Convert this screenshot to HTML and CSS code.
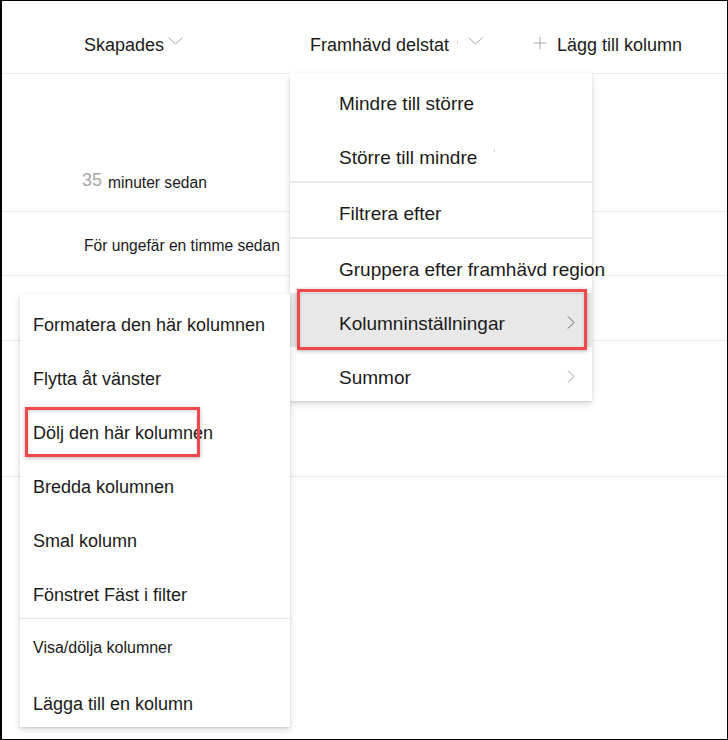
FILE: index.html
```html
<!DOCTYPE html>
<html lang="sv">
<head>
<meta charset="utf-8">
<title>Kolumninställningar</title>
<link rel="stylesheet" href="styles.css">
</head>
<body>
<div class="frame">
  <div class="header">
    <div class="hcol hcol-created">
      <span class="htext">Skapades</span>
      <svg class="hchev" width="15" height="8" viewBox="0 0 15 8"><path d="M0.5 0.5 L7.5 7 L14.5 0.5" fill="none" stroke="#a6a6a6" stroke-width="1"/></svg>
    </div>
    <div class="hcol hcol-state">
      <span class="htext">Framhävd delstat</span>
      <span class="speck speck-head"></span>
      <svg class="hchev hchev-state" width="15" height="8" viewBox="0 0 15 8"><path d="M0.5 0.5 L7.5 7 L14.5 0.5" fill="none" stroke="#a6a6a6" stroke-width="1"/></svg>
    </div>
    <div class="hcol hcol-add">
      <svg class="plus" width="12" height="12" viewBox="0 0 12 12"><path d="M6 0 V12 M0 6 H12" fill="none" stroke="#a6a6a6" stroke-width="1"/></svg>
      <span class="htext">Lägg till kolumn</span>
    </div>
  </div>

  <div class="rows">
    <div class="row row-1">
      <span class="num">35</span><span class="cell-text">minuter sedan</span>
    </div>
    <div class="row row-2">
      <span class="cell-text">För ungefär en timme sedan</span>
    </div>
    <div class="row row-3"></div>
    <div class="row row-4"></div>
  </div>

  <div class="menu main-menu">
    <div class="mi">Mindre till större</div>
    <div class="mi">Större till mindre<span class="speck speck-item"></span></div>
    <div class="msep"></div>
    <div class="mi">Filtrera efter</div>
    <div class="msep"></div>
    <div class="mi">Gruppera efter framhävd region</div>
    <div class="mi mi-sub mi-active">
      <span>Kolumninställningar</span>
      <svg class="chev" width="8" height="13" viewBox="0 0 8 13"><path d="M1 0.5 L7 6.5 L1 12.5" fill="none" stroke="#605e5c" stroke-width="1"/></svg>
    </div>
    <div class="mi mi-sub">
      <span>Summor</span>
      <svg class="chev" width="8" height="13" viewBox="0 0 8 13"><path d="M1 0.5 L7 6.5 L1 12.5" fill="none" stroke="#a19f9d" stroke-width="1"/></svg>
    </div>
  </div>

  <div class="menu sub-menu">
    <div class="si">Formatera den här kolumnen</div>
    <div class="si">Flytta åt vänster</div>
    <div class="si">Dölj den här kolumnen</div>
    <div class="si">Bredda kolumnen</div>
    <div class="si">Smal kolumn</div>
    <div class="si">Fönstret Fäst i filter</div>
    <div class="ssep"></div>
    <div class="si si-small">Visa/dölja kolumner</div>
    <div class="si">Lägga till en kolumn</div>
  </div>

  <div class="callout callout-main"></div>
  <div class="callout callout-sub"></div>
</div>
</body>
</html>
```

FILE: styles.css
```css
* { box-sizing: border-box; }

html, body {
  margin: 0;
  padding: 0;
  background: #fff;
}

.frame {
  position: relative;
  width: 728px;
  height: 740px;
  border: 1px solid #000;
  border-left-width: 2px;
  background: #fff;
  overflow: hidden;
  font-family: "Liberation Sans", Arial, sans-serif;
  color: #1b1a19;
}

/* Header */
.header {
  display: flex;
  align-items: flex-start;
  height: 73px;
  padding-top: 34px;
  padding-left: 82px;
  border-bottom: 1px solid #edebe9;
}

.hcol {
  display: flex;
  align-items: flex-start;
}

.hcol-created { width: 226px; }
.hcol-state { width: 223px; }

.htext {
  font-size: 18px;
  line-height: 20px;
  white-space: nowrap;
}

.hchev {
  margin-top: 2px;
  margin-left: 4px;
}

.hchev-state { margin-left: 10px; }

.speck {
  display: block;
  width: 1px;
  height: 3px;
  background: #cfcfcf;
}

.speck-head {
  margin-left: 8px;
  margin-top: 6px;
}

.plus {
  margin-top: 2px;
  margin-left: 1px;
  margin-right: 11px;
}

/* Rows */
.row {
  border-bottom: 1px solid #edebe9;
  display: flex;
  align-items: flex-start;
  padding-left: 80px;
}

.row-1 { height: 138px; padding-top: 96px; }
.row-2 { height: 64px; padding-top: 24px; padding-left: 82px; }
.row-3 { height: 65px; }
.row-4 { height: 136px; }

.num {
  font-size: 18px;
  line-height: 20px;
  color: #a8a8a8;
  margin-right: 6px;
}

.cell-text {
  font-size: 15.6px;
  line-height: 20px;
  margin-top: 3px;
  white-space: nowrap;
}

.row-2 .cell-text { margin-top: 0; }

/* Menus */
.menu {
  position: absolute;
  background: #fff;
  box-shadow: 0 3.2px 7.2px rgba(0, 0, 0, 0.14), 0 0.6px 1.8px rgba(0, 0, 0, 0.11);
}

.main-menu {
  left: 288px;
  top: 72px;
  width: 302px;
}

.mi {
  display: flex;
  align-items: flex-start;
  height: 54px;
  padding-top: 21px;
  padding-left: 49px;
  font-size: 19px;
  line-height: 20px;
  white-space: nowrap;
}

.mi-sub {
  justify-content: space-between;
  padding-right: 17px;
}

.mi-active {
  background: #e8e8e8;
}

.chev {
  margin-top: 2px;
}

.speck-item {
  margin-left: 17px;
  margin-top: 1px;
  background: #d8d8d8;
}

.msep {
  height: 2px;
  background: #ebeae9;
}

.sub-menu {
  left: 18px;
  top: 293px;
  width: 270px;
}

.si {
  height: 54px;
  padding-top: 21px;
  padding-left: 13px;
  font-size: 18px;
  line-height: 20px;
  white-space: nowrap;
}

.si-small {
  font-size: 16px;
  padding-top: 19px;
}

.ssep {
  height: 1px;
  background: #e6e5e4;
}

/* Annotation callouts */
.callout {
  position: absolute;
  border: 3px solid #f2484d;
  box-shadow: 0 1px 4px rgba(0, 0, 0, 0.3), inset 0 1px 3px rgba(0, 0, 0, 0.2);
}

.callout-main {
  left: 295px;
  top: 288px;
  width: 290px;
  height: 61px;
}

.callout-sub {
  left: 23px;
  top: 406px;
  width: 175px;
  height: 50px;
}
```
